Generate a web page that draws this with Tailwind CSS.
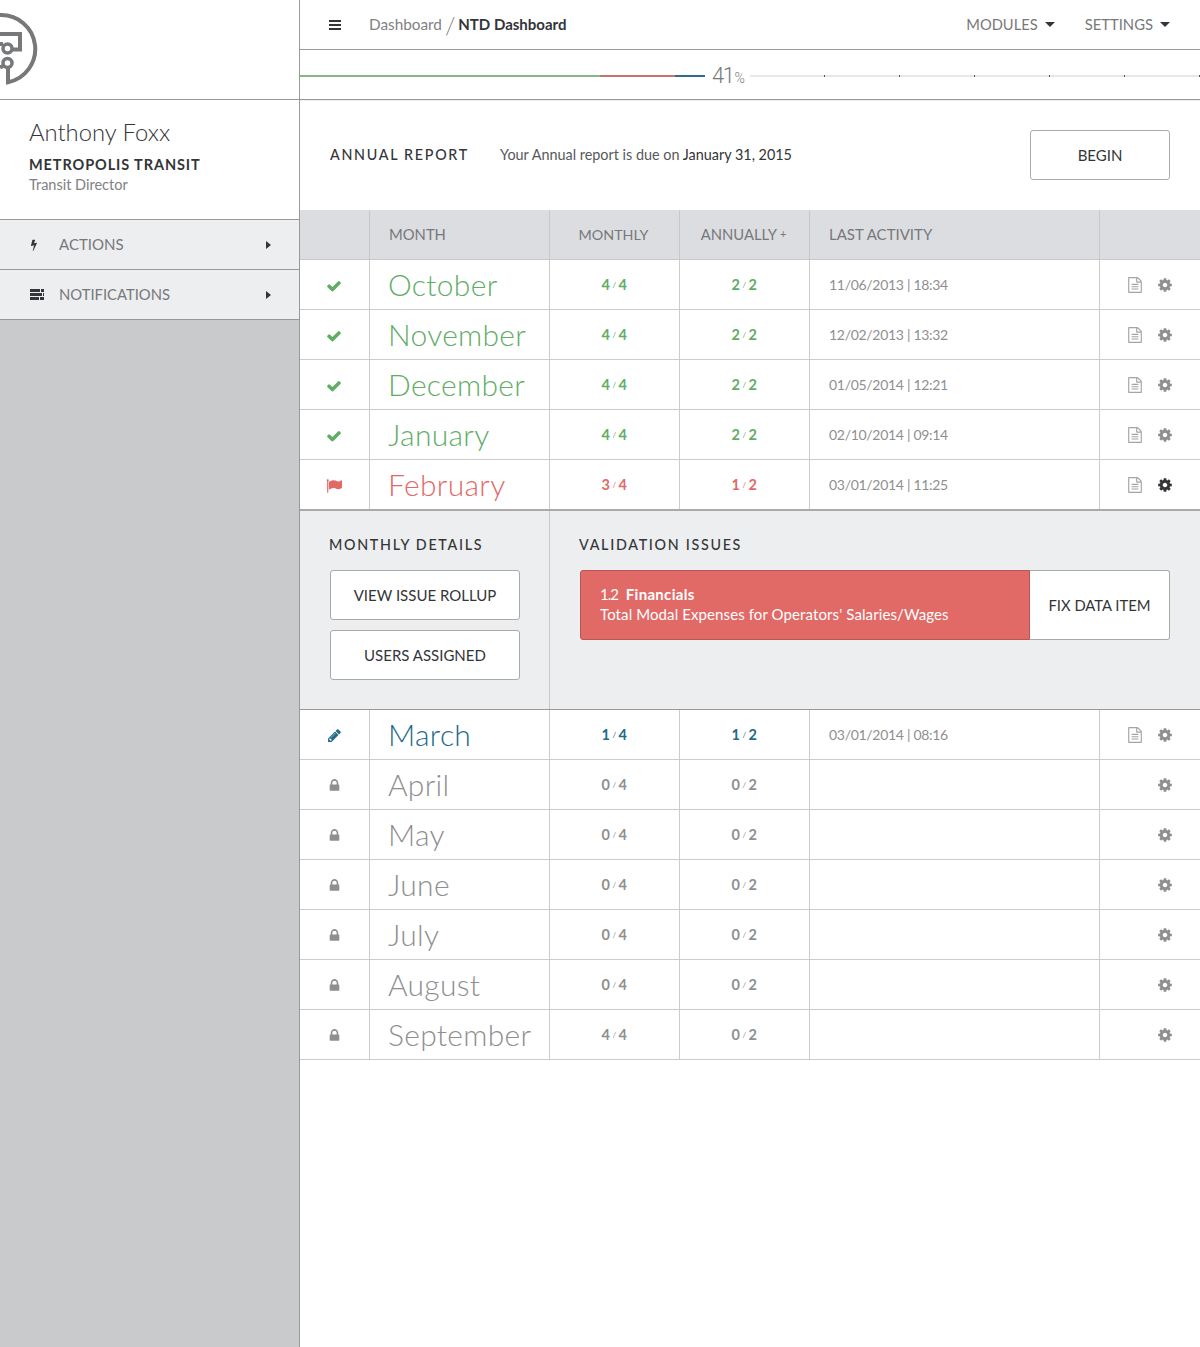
<!DOCTYPE html>
<html lang="en">
<head>
  <meta charset="UTF-8" />
  <title>NTD Dashboard</title>
  <script src="https://cdn.jsdelivr.net/npm/@tailwindcss/browser@4"></script>
</head>
<body class="bg-white font-['Lato',sans-serif] text-[#333538]">
  <svg class="hidden">
    <symbol id="i-check" viewBox="0 0 1792 1792"><path d="M1671 566q0 40-28 68l-724 724-136 136q-28 28-68 28t-68-28l-136-136-362-362q-28-28-28-68t28-68l136-136q28-28 68-28t68 28l294 295 656-657q28-28 68-28t68 28l136 136q28 28 28 68z"/></symbol>
    <symbol id="i-lock" viewBox="0 0 1792 1792"><path d="M640 768h512v-192q0-106-75-181t-181-75-181 75-75 181v192zm832 96v576q0 40-28 68t-68 28h-960q-40 0-68-28t-28-68v-576q0-40 28-68t68-28h32v-192q0-184 132-316t316-132 316 132 132 316v192h32q40 0 68 28t28 68z"/></symbol>
    <symbol id="i-cog" viewBox="0 0 1792 1792"><path d="M1152 896q0-106-75-181t-181-75-181 75-75 181 75 181 181 75 181-75 75-181zm512-109v222q0 12-8 23t-20 13l-185 28q-19 54-39 91 35 50 107 138 10 12 10 25t-9 23q-27 37-99 108t-94 71q-12 0-26-9l-138-108q-44 23-91 38-16 136-29 186-7 28-36 28h-222q-14 0-24.500-8.500t-11.500-21.500l-28-184q-49-16-90-37l-141 107q-10 9-25 9-14 0-25-11-126-114-165-168-7-10-7-23 0-12 8-23 15-21 51-66.500t54-70.500q-27-50-41-99l-183-27q-13-2-21-12.500t-8-23.500v-222q0-12 8-23t19-13l186-28q14-46 39-92-40-57-107-138-10-12-10-24 0-10 9-23 26-36 98.500-107.500t94.500-71.500q13 0 26 10l138 107q44-23 91-38 16-136 29-186 7-28 36-28h222q14 0 24.500 8.500t11.500 21.500l28 184q49 16 90 37l142-107q9-9 24-9 13 0 25 10 129 119 165 170 7 8 7 22 0 12-8 23-15 21-51 66.500t-54 70.500q26 50 41 98l183 28q13 2 21 12.500t8 23.500z"/></symbol>
    <symbol id="i-pencil" viewBox="0 0 1792 1792"><path d="M491 1536l91-91-235-235-91 91v107h128v128h107zm523-928q0-22-22-22-10 0-17 7l-542 542q-7 7-7 17 0 22 22 22 10 0 17-7l542-542q7-7 7-17zm-54-192l416 416-832 832h-416v-416zm683 96q0 53-37 90l-166 166-416-416 166-165q36-38 90-38 53 0 91 38l235 234q37 39 37 91z"/></symbol>
    <symbol id="i-flag" viewBox="0 0 1792 1792"><path d="M320 256q0 72-64 110v1266q0 13-9.500 22.500t-22.500 9.500h-64q-13 0-22.500-9.500t-9.500-22.500v-1266q-64-38-64-110 0-53 37.500-90.500t90.500-37.500 90.500 37.500 37.500 90.500zm1472 64v763q0 25-12.500 38.500t-39.500 27.500q-215 116-369 116-61 0-123.500-22t-108.500-48-115.500-48-142.500-22q-192 0-464 146-17 9-33 9-26 0-45-19t-19-45v-742q0-32 31-55 21-14 79-43 236-120 421-120 107 0 200 29t219 88q38 19 88 19 54 0 117.500-21t110-47 88-47 54.500-21q26 0 45 19t19 45z"/></symbol>
    <symbol id="i-bolt" viewBox="0 0 1792 1792"><path d="M1333 566q18 20 7 44l-540 1157q-13 25-42 25-4 0-14-2-17-5-25.500-19t-4.500-30l197-808-406 101q-4 1-12 1-18 0-31-11-18-15-13-39l201-825q4-14 16-23t28-9h328q19 0 32 12.500t13 29.500q0 8-5 18l-171 463 396-98q8-2 12-2 19 0 34 15z"/></symbol>
    <symbol id="i-file" viewBox="0 0 1792 1792"><path d="M1596 380q28 28 48 76t20 88v1152q0 40-28 68t-68 28h-1344q-40 0-68-28t-28-68v-1600q0-40 28-68t68-28h896q40 0 88 20t76 48zm-444-244v376h376q-10-29-22-41l-313-313q-12-12-41-22zm384 1528v-1024h-416q-40 0-68-28t-28-68v-416h-768v1536h1280zm-1024-864q0-14 9-23t23-9h704q14 0 23 9t9 23v64q0 14-9 23t-23 9h-704q-14 0-23-9t-9-23v-64zm736 224q14 0 23 9t9 23v64q0 14-9 23t-23 9h-704q-14 0-23-9t-9-23v-64q0-14 9-23t23-9h704zm0 256q14 0 23 9t9 23v64q0 14-9 23t-23 9h-704q-14 0-23-9t-9-23v-64q0-14 9-23t23-9h704z"/></symbol>
  </svg>

  <div class="flex h-[1347px] w-[1200px] overflow-hidden">
    <!-- Sidebar -->
    <aside class="w-[300px] shrink-0 bg-[#c9cacc] border-r border-[#999]">
      <div class="h-[100px] bg-white border-b border-[#999]">
        <svg width="60" height="99" viewBox="0 0 60 99" fill="none" stroke="#77787a" stroke-width="4">
          <path d="M0 15 A34 34 0 0 1 8 82.300 V68"/>
          <path d="M0 34 H20 V49.500 H12"/>
          <path d="M0 44 H3"/>
          <circle cx="7.500" cy="48.500" r="4.500" stroke-width="3.500"/>
          <circle cx="7.500" cy="63" r="4.500" stroke-width="3.500"/>
          <path d="M0 67.500 L3 66"/>
        </svg>
      </div>
      <div class="h-[120px] bg-white border-b border-[#999] pl-[29px] pt-[16px]">
        <div class="text-[23.800px] leading-[32px] font-light text-[#333538]">Anthony Foxx</div>
        <div class="mt-[8px] text-[14.500px] leading-[18px] font-bold tracking-[0.900px] text-[#333538]">METROPOLIS TRANSIT</div>
        <div class="mt-[2px] text-[14.500px] leading-[18px] text-[#808184]">Transit Director</div>
      </div>
      <div class="flex items-center h-[50px] bg-[#edeef0] border-b border-[#999] pl-[29px] pr-[28px] text-[15px] text-[#77787b]">
        <svg class="w-[12px] h-[14px] fill-[#333538] -ml-[1px]"><use href="#i-bolt"/></svg>
        <span class="ml-[19px] flex-1">ACTIONS</span>
        <span class="w-0 h-0 border-y-[4px] border-y-transparent border-l-[5px] border-l-[#333538]"></span>
      </div>
      <div class="flex items-center h-[50px] bg-[#edeef0] border-b border-[#999] pl-[30px] pr-[28px] text-[15px] text-[#77787b]">
        <div class="w-[14px] flex flex-col gap-px">
          <div class="flex gap-px"><span class="w-[10px] h-[3px] bg-[#333538]"></span><span class="w-[3px] h-[3px] bg-[#333538]"></span></div>
          <div class="flex gap-px"><span class="w-[12px] h-[3px] bg-[#333538]"></span><span class="w-px h-[3px] bg-[#333538]"></span></div>
          <div class="flex gap-px"><span class="w-[9px] h-[3px] bg-[#333538]"></span><span class="w-[4px] h-[3px] bg-[#333538]"></span></div>
        </div>
        <span class="ml-[15px] flex-1 text-[14.800px]">NOTIFICATIONS</span>
        <span class="w-0 h-0 border-y-[4px] border-y-transparent border-l-[5px] border-l-[#333538]"></span>
      </div>
    </aside>

    <main class="w-[900px] shrink-0">
      <!-- Top bar -->
      <header class="flex items-center h-[50px] border-b border-[#999] pl-[29px] pr-[30px] text-[15px]">
        <div class="w-[12px] flex flex-col gap-[2px] mr-[28px]">
          <span class="h-[2px] bg-[#333538]"></span>
          <span class="h-[2px] bg-[#333538]"></span>
          <span class="h-[2px] bg-[#333538]"></span>
        </div>
        <span class="text-[#808184] text-[15.300px]">Dashboard</span>
        <span class="mx-[3px] text-[24px] font-light text-[#808184] leading-none">/</span>
        <span class="font-bold text-[#333538]">NTD Dashboard</span>
        <span class="ml-auto text-[#77787b] text-[14.700px]">MODULES</span>
        <span class="ml-[7px] w-0 h-0 border-x-[5px] border-x-transparent border-t-[5px] border-t-[#333538]"></span>
        <span class="ml-[30px] text-[#77787b] text-[14.800px]">SETTINGS</span>
        <span class="ml-[7px] w-0 h-0 border-x-[5px] border-x-transparent border-t-[5px] border-t-[#333538]"></span>
      </header>

      <!-- Progress -->
      <div class="flex items-center h-[50px] pt-[2px] border-b border-[#999]">
        <span class="w-[300px] h-[2px] bg-[#8ab584]"></span>
        <span class="w-[75px] h-[2px] bg-[#c2756f]"></span>
        <span class="w-[30px] h-[2px] bg-[#2c6c84]"></span>
        <span class="ml-[7px] w-[38px] text-[22px] font-light text-[#77787b] tracking-[-1.500px] whitespace-nowrap font-['Roboto',sans-serif]">41<span class="text-[14px] tracking-normal ml-px">%</span></span>
        <div class="flex-1 h-[2px] bg-[#e3e8ec] pl-[74px] flex gap-[74px]">
          <span class="w-px h-[2px] bg-[#555]"></span>
          <span class="w-px h-[2px] bg-[#555]"></span>
          <span class="w-px h-[2px] bg-[#555]"></span>
          <span class="w-px h-[2px] bg-[#555]"></span>
          <span class="w-px h-[2px] bg-[#555]"></span>
          <span class="w-px h-[2px] bg-[#555]"></span>
        </div>
      </div>

      <!-- Annual report -->
      <section class="flex items-center h-[110px] pl-[30px] pr-[30px] pb-px border-t border-[#eee]">
        <h2 class="w-[170px] text-[14.300px] tracking-[1.700px] text-[#333538] font-medium">ANNUAL REPORT</h2>
        <p class="text-[14.400px] text-[#58595b]">Your Annual report is due on <span class="text-[#333538]">January 31, 2015</span></p>
        <button class="ml-auto w-[140px] h-[50px] bg-white border border-[#aaa] rounded-[3px] text-[15px] text-[#333538]">BEGIN</button>
      </section>

      <!-- Table header -->
      <div class="grid grid-cols-[70px_180px_130px_130px_290px_100px] h-[50px] bg-[#dcdde0] text-[15px] text-[#77787b]">
        <div class="border-r border-[#c8c9cb] border-b"></div>
        <div class="border-r border-[#c8c9cb] border-b flex items-center pl-[19px] text-[14.800px]">MONTH</div>
        <div class="border-r border-[#c8c9cb] border-b flex items-center justify-center text-[14.300px] pr-[2px]">MONTHLY</div>
        <div class="border-r border-[#c8c9cb] border-b flex items-center justify-center text-[14.800px] pr-[2px]">ANNUALLY<span class="ml-[3px] text-[11px]">+</span></div>
        <div class="border-r border-[#c8c9cb] border-b flex items-center pl-[19px]">LAST ACTIVITY</div>
        <div class="border-b border-[#c8c9cb]"></div>
      </div>

      <div id="rows-top"></div>

      <!-- Monthly details -->
      <section class="grid grid-cols-[250px_650px] h-[201px] bg-[#edeef0] border-t-2 border-t-[#aaa] border-b border-b-[#999] -mt-px">
        <div class="border-r border-[#c8c9cb] pl-[29px] pt-[24px]">
          <h3 class="text-[14.300px] leading-[20px] tracking-[1.700px] font-medium text-[#333538]">MONTHLY DETAILS</h3>
          <button class="block mt-[15px] ml-px w-[190px] h-[50px] bg-white border border-[#aaa] rounded-[3px] text-[15px] text-[#333538]">VIEW ISSUE ROLLUP</button>
          <button class="block mt-[10px] ml-px w-[190px] h-[50px] bg-white border border-[#aaa] rounded-[3px] text-[15px] text-[#333538]">USERS ASSIGNED</button>
        </div>
        <div class="pl-[29px] pt-[24px]">
          <h3 class="text-[14.300px] leading-[20px] tracking-[1.700px] font-medium text-[#333538]">VALIDATION ISSUES</h3>
          <div class="flex mt-[15px] ml-px w-[590px] h-[70px]">
            <div class="w-[450px] bg-[#e16a67] border border-[#b95654] rounded-l-[3px] pl-[19px] pt-[13px] text-[15px] leading-[20px] text-white">
              <div><span class="mr-[4px] tracking-[-1px]">1.2</span> <span class="font-bold tracking-[0.300px]">Financials</span></div>
              <div class="tracking-[0.100px]">Total Modal Expenses for Operators' Salaries/Wages</div>
            </div>
            <button class="w-[140px] bg-white border border-l-0 border-[#aaa] rounded-r-[3px] text-[14.800px] text-[#333538]">FIX DATA ITEM</button>
          </div>
        </div>
      </section>

      <div id="rows-bottom"></div>
    </main>
  </div>

  <script>
    const styles = {
      done:   { text: "text-[#62ad66]", icon: "i-check",  iconCls: "w-[16px] h-[16px] fill-[#62ad66]" },
      flag:   { text: "text-[#e16a67]", icon: "i-flag",   iconCls: "w-[16px] h-[16px] fill-[#e16a67]" },
      active: { text: "text-[#216b87]", icon: "i-pencil", iconCls: "w-[15px] h-[15px] fill-[#216b87]" },
      locked: { text: "text-[#8e8f91]", icon: "i-lock",   iconCls: "w-[15px] h-[15px] fill-[#8e8f91]" }
    };

    function ratio(value, cls) {
      const [a, b] = value.split("/");
      return `<div class="border-r border-[#ccc] flex items-center justify-center text-[14.500px] font-bold tracking-[0.500px] ${cls}">${a}<span class="mx-[2px] text-[8px] font-normal">/</span>${b}</div>`;
    }

    function row(r) {
      const s = styles[r.state];
      const file = r.activity
        ? `<svg class="w-[16px] h-[16px] fill-[#a3a4a6] mr-[14px]"><use href="#i-file"/></svg>`
        : "";
      const cog = r.cog || "fill-[#8e8f91]";
      return `<div class="grid grid-cols-[70px_180px_130px_130px_290px_100px] h-[50px] border-b border-[#ccc]">
        <div class="border-r border-[#ccc] flex items-center justify-center pr-px pt-[2px]"><svg class="${s.iconCls}"><use href="#${s.icon}"/></svg></div>
        <div class="border-r border-[#ccc] flex items-center pl-[18px] text-[30px] font-light tracking-[0.300px] whitespace-nowrap ${s.text}">${r.month}</div>
        ${ratio(r.monthly, s.text)}
        ${ratio(r.annually, s.text)}
        <div class="border-r border-[#ccc] flex items-center pl-[19px] text-[14px] tracking-[-0.300px] text-[#8e8f91]">${r.activity || ""}</div>
        <div class="flex items-center justify-end pr-[27px]">${file}<svg class="w-[16px] h-[16px] ${cog}"><use href="#i-cog"/></svg></div>
      </div>`;
    }

    const rowsTop = [
      { state: "done", month: "October", monthly: "4/4", annually: "2/2", activity: "11/06/2013 | 18:34" },
      { state: "done", month: "November", monthly: "4/4", annually: "2/2", activity: "12/02/2013 | 13:32" },
      { state: "done", month: "December", monthly: "4/4", annually: "2/2", activity: "01/05/2014 | 12:21" },
      { state: "done", month: "January", monthly: "4/4", annually: "2/2", activity: "02/10/2014 | 09:14" },
      { state: "flag", month: "February", monthly: "3/4", annually: "1/2", activity: "03/01/2014 | 11:25", cog: "fill-[#333538]" }
    ];
    const rowsBottom = [
      { state: "active", month: "March", monthly: "1/4", annually: "1/2", activity: "03/01/2014 | 08:16" },
      { state: "locked", month: "April", monthly: "0/4", annually: "0/2" },
      { state: "locked", month: "May", monthly: "0/4", annually: "0/2" },
      { state: "locked", month: "June", monthly: "0/4", annually: "0/2" },
      { state: "locked", month: "July", monthly: "0/4", annually: "0/2" },
      { state: "locked", month: "August", monthly: "0/4", annually: "0/2" },
      { state: "locked", month: "September", monthly: "4/4", annually: "0/2" }
    ];
    document.getElementById("rows-top").innerHTML = rowsTop.map(row).join("");
    document.getElementById("rows-bottom").innerHTML = rowsBottom.map(row).join("");
  </script>
</body>
</html>
